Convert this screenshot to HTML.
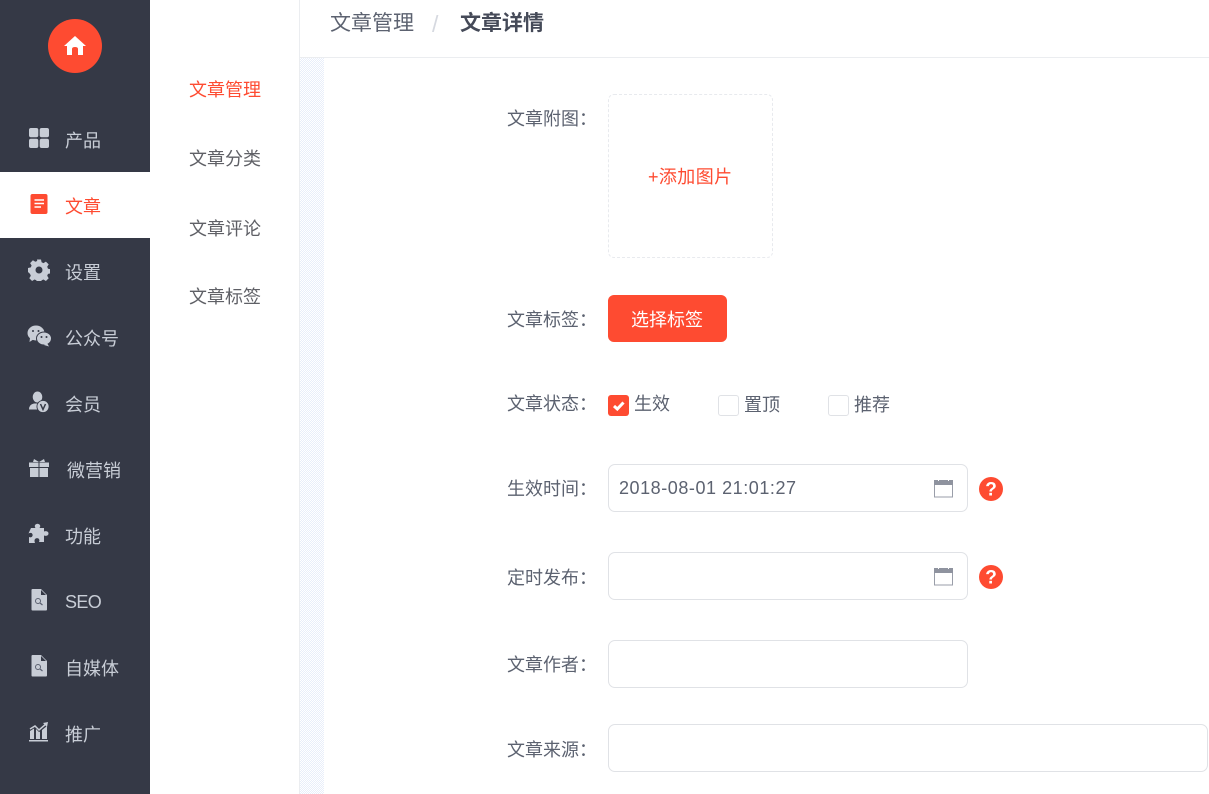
<!DOCTYPE html>
<html lang="zh">
<head>
<meta charset="utf-8">
<style>
html,body{margin:0;padding:0;width:1209px;height:794px;overflow:hidden;background:#fff;font-family:"Liberation Sans","Noto Sans CJK SC",sans-serif;}
.a{position:absolute;white-space:nowrap;line-height:24px;}
#side{position:absolute;left:0;top:0;width:150px;height:794px;background:#353946;}
.active{position:absolute;left:0;top:172px;width:150px;height:66px;background:#fff;}
.logo{position:absolute;left:48px;top:19px;width:54px;height:54px;border-radius:50%;background:#fe4b31;}
.m{font-size:18px;color:#c8cdd6;left:65px;}
.s{font-size:18px;color:#5f6066;left:189px;}
.l{font-size:18px;color:#5c6270;left:507px;}
.c{font-size:18px;color:#5c6270;}
.ic{position:absolute;}
.inp{position:absolute;left:608px;width:358px;height:46px;border:1px solid #e0e2e6;border-radius:7px;background:#fff;}
.cb{position:absolute;top:395px;width:19px;height:19px;border:1px solid #e0e2e6;border-radius:3px;background:#fff;}
</style>
</head>
<body>
<div id="side"></div>
<div class="active"></div>
<div class="logo"></div>
<svg class="ic" style="left:63px;top:35px" width="24" height="22" viewBox="0 0 24 22"><path d="M12 1 L23 11 L20 11 L20 20 L15 20 L15 14 Q15 12 12 12 Q9 12 9 14 L9 20 L4 20 L4 11 L1 11 Z" fill="#fff"/></svg>

<svg class="ic" style="left:29px;top:128px" width="20" height="20" viewBox="0 0 20 20" fill="#c8cdd6"><rect x="0" y="0" width="9.300" height="9.300" rx="2"/><rect x="10.700" y="0" width="9.300" height="9.300" rx="2"/><rect x="0" y="10.700" width="9.300" height="9.300" rx="2"/><rect x="10.700" y="10.700" width="9.300" height="9.300" rx="2"/></svg>
<div class="a m" style="top:129px">产品</div>

<svg class="ic" style="left:30px;top:194px" width="18" height="20" viewBox="0 0 18 20"><rect x="0.500" y="0" width="17" height="20" rx="2" fill="#fe4b31"/><path d="M4.500 6H14M4.500 9.500H14M4.500 13H11" stroke="#fff" stroke-width="1.500"/></svg>
<div class="a m" style="top:195px;color:#fe4b31">文章</div>

<svg class="ic" style="left:28px;top:259px" width="22" height="22" viewBox="0 0 22 22"><path fill="#c8cdd6" fill-rule="evenodd" d="M9 0.500h4l.6 2.800 1.900.8 2.400-1.500 2.800 2.800-1.500 2.400.8 1.900 2.800.6v4l-2.800.6-.8 1.900 1.500 2.400-2.800 2.800-2.400-1.500-1.900.8-.6 2.800H9l-.6-2.800-1.900-.8-2.400 1.500-2.800-2.800 1.500-2.400-.8-1.900L0 13V9l2.800-.6.8-1.900L2.100 4.100 4.900 1.300l2.400 1.500 1.900-.8z M11 7.500a3.500 3.500 0 1 0 0 7 3.500 3.500 0 0 0 0-7z"/></svg>
<div class="a m" style="top:261px">设置</div>

<svg class="ic" style="left:27px;top:325px" width="25" height="22" viewBox="0 0 25 22"><ellipse cx="9" cy="8" rx="8.500" ry="7.500" fill="#c8cdd6"/><path d="M3 13 L2.500 17 L7 14 Z" fill="#c8cdd6"/><ellipse cx="17" cy="13.500" rx="7.500" ry="6.500" fill="#c8cdd6" stroke="#353946" stroke-width="1"/><path d="M20 18 L22 21.500 L17 20 Z" fill="#c8cdd6"/><circle cx="6" cy="6" r="1" fill="#353946"/><circle cx="11.500" cy="6" r="1" fill="#353946"/><circle cx="14.500" cy="12" r="1" fill="#353946"/><circle cx="19.500" cy="12" r="1" fill="#353946"/></svg>
<div class="a m" style="top:327px">公众号</div>

<svg class="ic" style="left:28px;top:391px" width="22" height="22" viewBox="0 0 22 22"><ellipse cx="9.500" cy="6" rx="4.800" ry="5.500" fill="#c8cdd6"/><path d="M1 18.500 Q1 13.500 6 12.500 L11 12.500 Q8.500 15 9.500 18.500 Z" fill="#c8cdd6"/><circle cx="15" cy="15.500" r="6.500" fill="#353946"/><circle cx="15" cy="15.500" r="5.600" fill="#c8cdd6"/><path d="M12.500 13 L15 18.500 L17.500 13" fill="none" stroke="#353946" stroke-width="1.500"/></svg>
<div class="a m" style="top:393px">会员</div>

<svg class="ic" style="left:29px;top:458px" width="21" height="20" viewBox="0 0 21 20" fill="#c8cdd6"><rect x="0" y="4.500" width="20" height="4.500"/><rect x="1" y="10" width="18" height="9"/><path d="M5 1 L10 4 L15 1 L16 4 L4 4 Z"/><rect x="9.500" y="4" width="1" height="15" fill="#353946"/></svg>
<div class="a m" style="top:459px;left:67px">微营销</div>

<svg class="ic" style="left:28px;top:523px" width="22" height="21" viewBox="0 0 22 21"><path fill="#c8cdd6" d="M7.500 5 Q6 3 7.500 1.500 Q9.500 0 11.500 1.500 Q13 3 11.500 5 L16 5 L16 8.500 Q18.500 7.500 20 9 Q21 10.500 20 12 Q18.500 13.500 16 12.500 L16 19 L11 19 Q12 17 10.500 15.500 Q8.500 14.500 7 16 Q6 17.500 7 20 L1 20 L1 14 Q3.500 15 4.500 13 Q5 11 3.500 10 Q2 9.500 0.500 10.500 L3 5 Z"/></svg>
<div class="a m" style="top:525px">功能</div>

<svg class="ic" style="left:31px;top:589px" width="16" height="22" viewBox="0 0 16 22"><path d="M1.500 0 H10 L16 6 V20.500 Q16 21.500 15 21.500 H1.500 Q0.500 21.500 0.500 20.500 V1 Q0.500 0 1.500 0Z" fill="#c8cdd6"/><path d="M10 1 V6 H15Z" fill="#353946"/><circle cx="7" cy="12" r="2.500" fill="none" stroke="#5a6070" stroke-width="1"/><path d="M9 14 L11.500 16" stroke="#5a6070" stroke-width="1.200"/></svg>
<div class="a m" style="top:590px;letter-spacing:-.6px">SEO</div>

<svg class="ic" style="left:31px;top:655px" width="16" height="22" viewBox="0 0 16 22"><path d="M1.500 0 H10 L16 6 V20.500 Q16 21.500 15 21.500 H1.500 Q0.500 21.500 0.500 20.500 V1 Q0.500 0 1.500 0Z" fill="#c8cdd6"/><path d="M10 1 V6 H15Z" fill="#353946"/><circle cx="7" cy="12" r="2.500" fill="none" stroke="#5a6070" stroke-width="1"/><path d="M9 14 L11.500 16" stroke="#5a6070" stroke-width="1.200"/></svg>
<div class="a m" style="top:657px">自媒体</div>

<svg class="ic" style="left:29px;top:722px" width="20" height="20" viewBox="0 0 20 20"><path d="M1 7 L6 4 L10 8 L17 2" fill="none" stroke="#c8cdd6" stroke-width="1.500"/><path d="M14 1 L19 0 L18 5Z" fill="#c8cdd6"/><path d="M1 9 L5 6.500 V17 H1Z M7 7 L10 10 L11 9.500 V17 H7Z M13 8 L18 4 V17 H13Z" fill="#c8cdd6"/><rect x="0" y="18" width="19" height="1.500" fill="#c8cdd6"/></svg>
<div class="a m" style="top:723px">推广</div>

<div class="a s" style="top:78px;color:#fe4b31">文章管理</div>
<div class="a s" style="top:147px">文章分类</div>
<div class="a s" style="top:217px">文章评论</div>
<div class="a s" style="top:285px">文章标签</div>

<div style="position:absolute;left:299px;top:0;width:1px;height:794px;background:#ebedf0"></div>
<div style="position:absolute;left:300px;top:57px;width:909px;height:1px;background:#ebedf0"></div>
<div style="position:absolute;left:300px;top:58px;width:24px;height:736px;background:repeating-conic-gradient(#e8eefa 0 25%,#fff 0 50%) 0 0/2px 2px"></div>

<div class="a" style="left:330px;top:12px;font-size:21px;color:#5c6270">文章管理</div>
<div class="a" style="left:432px;top:12px;font-size:23px;color:#d6d9e0">/</div>
<div class="a" style="left:460px;top:12px;font-size:21px;font-weight:700;color:#454a58">文章详情</div>

<div class="a l" style="top:107px">文章附图：</div>
<div style="position:absolute;left:608px;top:94px;width:163px;height:162px;border:1px dashed #e8eaee;border-radius:6px"></div>
<div class="a" style="left:648px;top:165px;font-size:18px;letter-spacing:.4px;color:#fe4b31">+添加图片</div>

<div class="a l" style="top:308px">文章标签：</div>
<div style="position:absolute;left:608px;top:295px;width:119px;height:47px;border-radius:6px;background:#fe4b31"></div>
<div class="a" style="left:631px;top:308px;font-size:18px;color:#fff">选择标签</div>

<div class="a l" style="top:392px">文章状态：</div>
<svg class="ic" style="left:608px;top:395px" width="21" height="21" viewBox="0 0 21 21"><rect width="21" height="21" rx="3" fill="#fe4b31"/><path d="M6 11 L9.300 14 L15.500 7.500" fill="none" stroke="#fff" stroke-width="3"/></svg>
<div class="a c" style="left:634px;top:392px">生效</div>
<div class="cb" style="left:718px"></div>
<div class="a c" style="left:744px;top:393px">置顶</div>
<div class="cb" style="left:828px"></div>
<div class="a c" style="left:854px;top:393px">推荐</div>

<div class="a l" style="top:477px">生效时间：</div>
<div class="inp" style="top:464px"></div>
<div class="a c" style="left:619px;top:476px;letter-spacing:.55px">2018-08-01 21:01:27</div>
<svg class="ic" style="left:934px;top:479px" width="20" height="19" viewBox="0 0 20 19"><rect x="0.500" y="1.500" width="18" height="16.500" fill="#fff" stroke="#9a9ea9"/><rect x="0" y="1" width="19" height="5" fill="#8f939f"/><rect x="4" y="1" width="1" height="1" fill="#fff"/><rect x="14" y="1" width="1" height="1" fill="#fff"/></svg>
<svg class="ic" style="left:979px;top:477px" width="24" height="24" viewBox="0 0 24 24"><circle cx="12" cy="12" r="12" fill="#fe4b31"/><text x="12" y="18.500" text-anchor="middle" font-size="19" font-weight="700" fill="#fff" font-family="Liberation Sans">?</text></svg>

<div class="a l" style="top:566px">定时发布：</div>
<div class="inp" style="top:552px"></div>
<svg class="ic" style="left:934px;top:567px" width="20" height="19" viewBox="0 0 20 19"><rect x="0.500" y="1.500" width="18" height="16.500" fill="#fff" stroke="#9a9ea9"/><rect x="0" y="1" width="19" height="5" fill="#8f939f"/><rect x="4" y="1" width="1" height="1" fill="#fff"/><rect x="14" y="1" width="1" height="1" fill="#fff"/></svg>
<svg class="ic" style="left:979px;top:565px" width="24" height="24" viewBox="0 0 24 24"><circle cx="12" cy="12" r="12" fill="#fe4b31"/><text x="12" y="18.500" text-anchor="middle" font-size="19" font-weight="700" fill="#fff" font-family="Liberation Sans">?</text></svg>

<div class="a l" style="top:653px">文章作者：</div>
<div class="inp" style="top:640px"></div>

<div class="a l" style="top:738px">文章来源：</div>
<div class="inp" style="top:724px;width:598px"></div>
</body>
</html>
